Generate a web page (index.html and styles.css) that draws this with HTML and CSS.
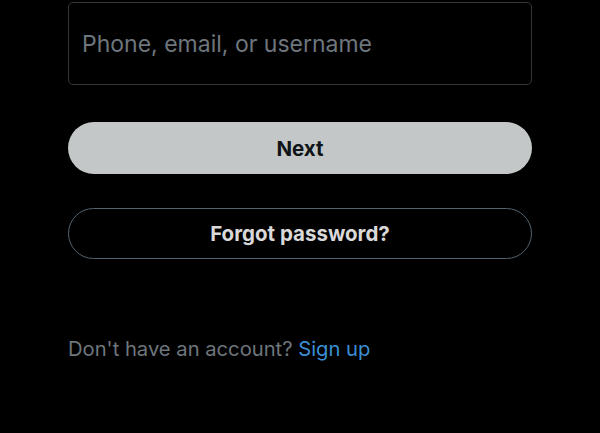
FILE: index.html
```html
<!DOCTYPE html>
<html>
<head>
<meta charset="utf-8">
<link rel="stylesheet" href="styles.css">
</head>
<body>
<main class="form">
  <div class="field"><span class="placeholder">Phone, email, or username</span></div>
  <button class="btn btn-primary">Next</button>
  <button class="btn btn-outline">Forgot password?</button>
  <p class="footer">Don't have an account? <a class="link">Sign up</a></p>
</main>
</body>
</html>
```
FILE: styles.css
```css
html, body {
  margin: 0;
  padding: 0;
  background: #000;
  width: 600px;
  height: 433px;
  overflow: hidden;
}
body {
  font-family: Inter, "Noto Sans", sans-serif;
}
.form {
  display: flex;
  flex-direction: column;
  padding: 2px 68px 0 68px;
}
.field {
  height: 83px;
  box-sizing: border-box;
  border: 1px solid #333639;
  border-radius: 5px;
  display: flex;
  align-items: center;
  padding: 0 13px;
}
.placeholder {
  color: #6e767d;
  font-size: 23px;
  position: relative;
  top: 0px;
}
.btn {
  font-family: Inter, "Noto Sans", sans-serif;
  font-weight: 700;
  font-size: 20.5px;
  border-radius: 26px;
  width: 100%;
  box-sizing: border-box;
  cursor: pointer;
}
.btn-primary {
  margin-top: 37px;
  height: 52px;
  background: #c3c7c7;
  color: #0f1419;
  border: none;
}
.btn-outline {
  margin-top: 34px;
  height: 51px;
  background: #000;
  color: #d9d9d9;
  border: 1px solid #536471;
}
.footer {
  margin: 78px 0 0 0;
  color: #6e767d;
  font-size: 20.2px;
  line-height: 24px;
}
.link {
  color: #3b8fd6;
}
```
